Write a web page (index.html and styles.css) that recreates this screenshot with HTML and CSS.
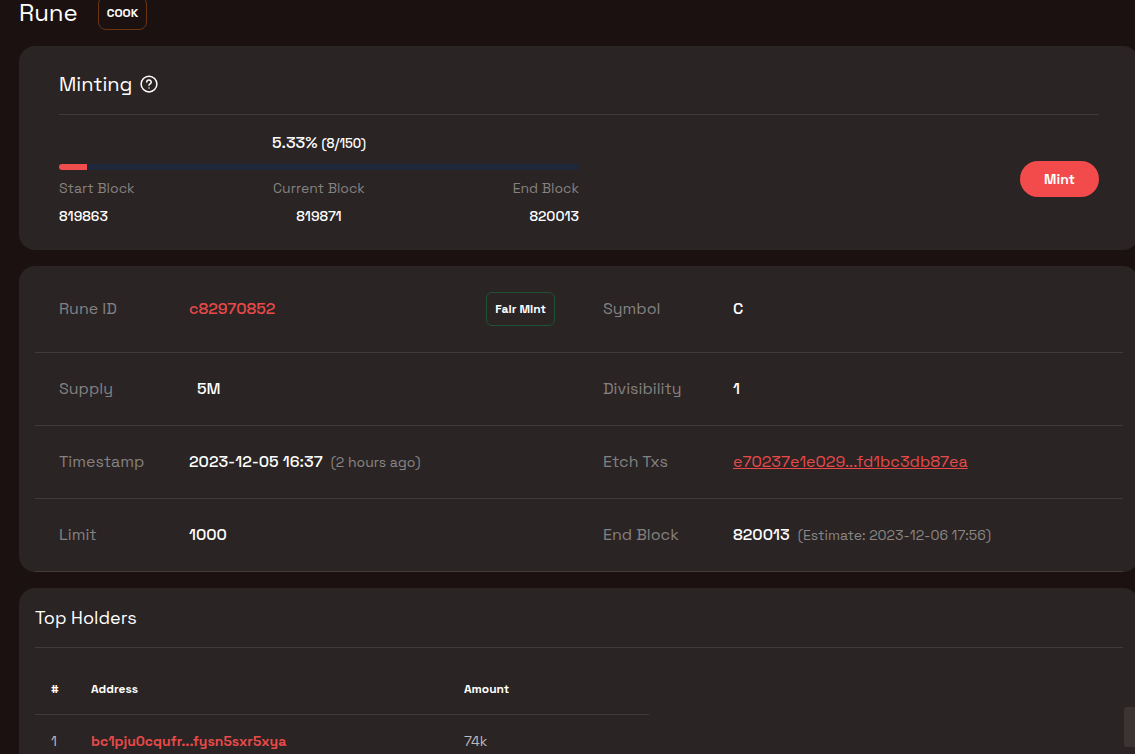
FILE: index.html
```
<!DOCTYPE html>
<html lang="en">

<head>
    <meta charset="UTF-8">
    <meta name="viewport" content="width=device-width, initial-scale=1.0">
    <title>Rune COOK</title>
    <link rel="stylesheet" href="styles.css">
</head>

<body>
    <main>
        <header class="page-header">
            <h1>Rune</h1>
            <span class="badge badge-orange">COOK</span>
        </header>

        <section class="card minting">
            <h2>
                Minting
                <svg class="help-icon" viewBox="0 0 24 24" fill="none" stroke="currentColor" stroke-width="2" stroke-linecap="round" stroke-linejoin="round" aria-label="Help">
                    <circle cx="12" cy="12" r="10.5" />
                    <path d="M9 9.4a3 3 0 0 1 6 .3c0 2-3 2.3-3 4" />
                    <path d="M12 17.3v.1" />
                </svg>
            </h2>
            <div class="minting-body">
                <div class="progress">
                    <div class="progress-text">5.33% <small>(8/150)</small></div>
                    <div class="progress-bar">
                        <div class="progress-fill" style="width: 5.33%"></div>
                    </div>
                    <div class="blocks">
                        <div class="block">
                            <span class="block-label">Start Block</span>
                            <span>819863</span>
                        </div>
                        <div class="block block-center">
                            <span class="block-label">Current Block</span>
                            <span>819871</span>
                        </div>
                        <div class="block block-end">
                            <span class="block-label">End Block</span>
                            <span>820013</span>
                        </div>
                    </div>
                </div>
                <button type="button" class="mint-button">Mint</button>
            </div>
        </section>

        <section class="card info">
            <div class="info-row info-row-first">
                <div class="info-cell">
                    <span class="label">Rune ID</span>
                    <span class="value rune-id">c82970852</span>
                    <span class="badge badge-green">Fair Mint</span>
                </div>
                <div class="info-cell">
                    <span class="label">Symbol</span>
                    <span class="value">C</span>
                </div>
            </div>
            <div class="info-row">
                <div class="info-cell">
                    <span class="label">Supply</span>
                    <span class="value supply">5M</span>
                </div>
                <div class="info-cell">
                    <span class="label">Divisibility</span>
                    <span class="value">1</span>
                </div>
            </div>
            <div class="info-row">
                <div class="info-cell">
                    <span class="label">Timestamp</span>
                    <span class="value">2023-12-05 16:37</span>
                    <span class="note">(2 hours ago)</span>
                </div>
                <div class="info-cell">
                    <span class="label">Etch Txs</span>
                    <a class="value tx-link" href="#">e70237e1e029...fd1bc3db87ea</a>
                </div>
            </div>
            <div class="info-row">
                <div class="info-cell">
                    <span class="label">Limit</span>
                    <span class="value">1000</span>
                </div>
                <div class="info-cell">
                    <span class="label">End Block</span>
                    <span class="value">820013</span>
                    <span class="note">(Estimate: 2023-12-06 17:56)</span>
                </div>
            </div>
        </section>

        <section class="card holders">
            <h2>Top Holders</h2>
            <table>
                <thead>
                    <tr>
                        <th class="col-rank">#</th>
                        <th class="col-address">Address</th>
                        <th>Amount</th>
                    </tr>
                </thead>
                <tbody>
                    <tr>
                        <td>1</td>
                        <td><a href="#">bc1pju0cqufr...fysn5sxr5xya</a></td>
                        <td>74k</td>
                    </tr>
                </tbody>
            </table>
        </section>
    </main>
    <div class="side-tab"></div>
</body>

</html>
```
FILE: styles.css
```
/* General Styles */
* {
    box-sizing: border-box;
}

body {
    margin: 0;
    height: 100vh;
    overflow: hidden;
    font-family: "Space Grotesk", Inter, sans-serif;
    font-size: 16px;
    line-height: 24px;
    background-color: #1b1111;
    color: #ffffff;
}

main {
    display: flex;
    flex-direction: column;
    gap: 16px;
    /* Cards run slightly past the right edge */
    margin: -4px -4px 0 19px;
}

h1,
h2 {
    margin: 0;
    font-weight: 400;
}

/* Header */
.page-header {
    display: flex;
    align-items: center;
    gap: 20px;
}

h1 {
    font-size: 24px;
    line-height: 24px;
}

.badge {
    padding: 8px;
    border: 1px solid;
    border-radius: 6px;
    font-size: 12px;
    line-height: 16px;
    font-weight: 700;
}

.badge-orange {
    border-color: #6b3512;
    border-radius: 8px;
}

.badge-green {
    margin-left: auto;
    border-color: #1f5135;
}

/* Cards */
.card {
    background-color: #2a2424;
    border-radius: 16px;
}

/* Minting */
.minting {
    padding: 24px 40px;
}

.minting h2 {
    display: flex;
    align-items: center;
    gap: 8px;
    padding-bottom: 16px;
    border-bottom: 1px solid #403a3a;
    font-size: 20px;
    line-height: 28px;
}

.help-icon {
    width: 18px;
    height: 18px;
}

.minting-body {
    display: flex;
    align-items: center;
    justify-content: space-between;
    padding-top: 16px;
}

.progress {
    width: 50%;
}

.progress-text {
    text-align: center;
    font-weight: 500;
}

.progress-text small {
    font-size: 13px;
}

.progress-bar {
    height: 6px;
    margin: 8px 0;
    border-radius: 3px;
    overflow: hidden;
    background-color: #1f273a;
}

.progress-fill {
    height: 100%;
    background-color: #f04d4d;
}

.blocks {
    display: grid;
    grid-template-columns: 1fr 1fr 1fr;
}

.block {
    display: flex;
    flex-direction: column;
    gap: 8px;
    font-size: 14px;
    line-height: 20px;
    font-weight: 500;
}

.block-center {
    align-items: center;
}

.block-end {
    align-items: flex-end;
}

.block-label {
    color: #858181;
    font-weight: 400;
}

.mint-button {
    padding: 8px 24px;
    border: none;
    border-radius: 18px;
    background-color: #f34b4b;
    color: #ffffff;
    font-family: inherit;
    font-size: 14px;
    line-height: 20px;
    font-weight: 700;
    cursor: pointer;
}

/* Rune info */
.info {
    padding: 0 16px;
}

.info-row {
    display: grid;
    grid-template-columns: 1fr 1fr;
    border-bottom: 1px solid #403a3a;
}

.info-cell {
    display: flex;
    align-items: center;
    padding: 24px;
}

.info-row-first .info-cell {
    padding: 26px 24px;
}

.label {
    width: 130px;
    color: #858181;
}

.value {
    font-weight: 500;
}

.supply {
    padding-left: 8px;
}

.rune-id,
.tx-link {
    color: #e84a4a;
}

.tx-link {
    font-weight: 400;
}

.note {
    margin-left: 8px;
    color: #8a8686;
    font-size: 14px;
}

/* Top Holders */
.holders {
    padding: 16px;
}

.holders h2 {
    margin-bottom: 15px;
    padding: 2px 0 17px;
    border-bottom: 1px solid #403a3a;
    font-size: 18px;
}

table {
    width: 614px;
    border-spacing: 0;
    table-layout: fixed;
    font-size: 14px;
    line-height: 20px;
}

th,
td {
    padding: 16px;
    text-align: left;
    border-bottom: 1px solid #403a3a;
}

th {
    padding-bottom: 15px;
    font-size: 12px;
}

td {
    color: #bfb9b9;
}

td a {
    color: #e84a4a;
    font-weight: 600;
    text-decoration: none;
}

.col-rank {
    width: 40px;
}

.col-address {
    width: 373px;
}

/* Floating tab on the right edge */
.side-tab {
    position: fixed;
    right: 0;
    bottom: 7px;
    width: 11px;
    height: 40px;
    border-radius: 3px 0 0 3px;
    background-color: #3c3333;
}
```
